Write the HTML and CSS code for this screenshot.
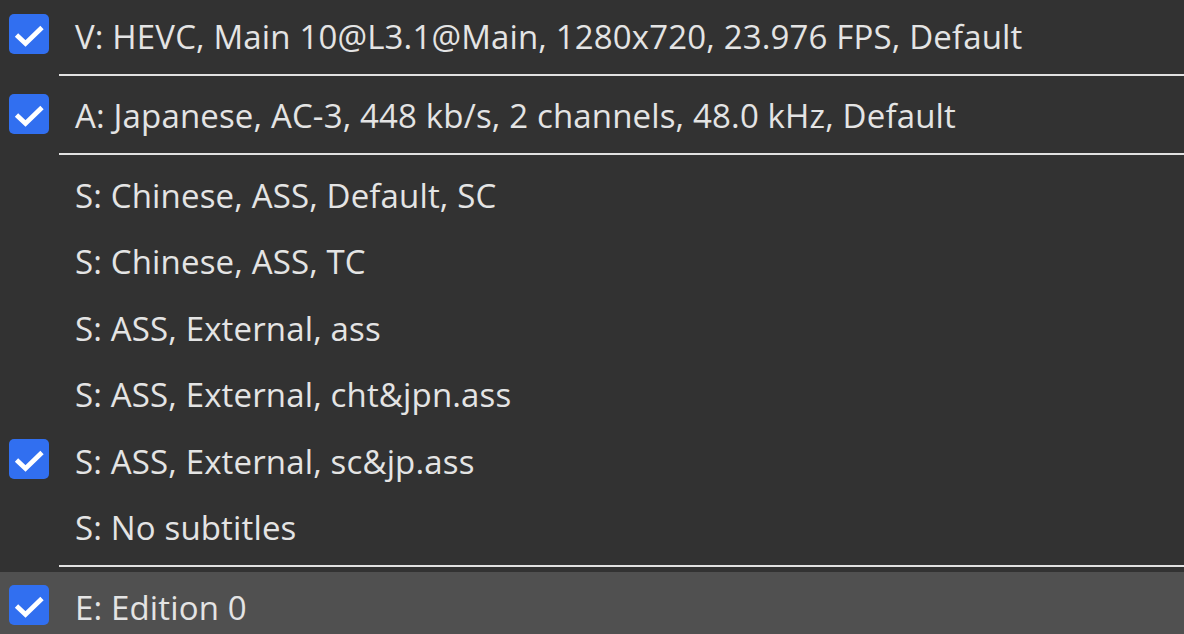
FILE: index.html
```html
<!DOCTYPE html>
<html>
<head>
<meta charset="utf-8">
<link rel="stylesheet" href="styles.css">
</head>
<body>
<div class="menu">
  <div class="item">
    <span class="check on"><svg viewBox="0 0 40 40" width="40" height="40"><path d="M7.5 21 L16.5 29.5 L33 13.5" fill="none" stroke="#fff" stroke-width="4.8" stroke-linecap="butt" stroke-linejoin="miter"/></svg></span>
    <span class="label">V: HEVC, Main 10@L3.1@Main, 1280x720, 23.976 FPS, Default</span>
  </div>
  <div class="sep"></div>
  <div class="item">
    <span class="check on"><svg viewBox="0 0 40 40" width="40" height="40"><path d="M7.5 21 L16.5 29.5 L33 13.5" fill="none" stroke="#fff" stroke-width="4.8" stroke-linecap="butt" stroke-linejoin="miter"/></svg></span>
    <span class="label">A: Japanese, AC-3, 448 kb/s, 2 channels, 48.0 kHz, Default</span>
  </div>
  <div class="sep"></div>
  <div class="item">
    <span class="check"></span>
    <span class="label">S: Chinese, ASS, Default, SC</span>
  </div>
  <div class="item">
    <span class="check"></span>
    <span class="label">S: Chinese, ASS, TC</span>
  </div>
  <div class="item">
    <span class="check"></span>
    <span class="label">S: ASS, External, ass</span>
  </div>
  <div class="item">
    <span class="check"></span>
    <span class="label">S: ASS, External, cht&amp;jpn.ass</span>
  </div>
  <div class="item">
    <span class="check on"><svg viewBox="0 0 40 40" width="40" height="40"><path d="M7.5 21 L16.5 29.5 L33 13.5" fill="none" stroke="#fff" stroke-width="4.8" stroke-linecap="butt" stroke-linejoin="miter"/></svg></span>
    <span class="label">S: ASS, External, sc&amp;jp.ass</span>
  </div>
  <div class="item">
    <span class="check"></span>
    <span class="label">S: No subtitles</span>
  </div>
  <div class="sep"></div>
  <div class="item active">
    <span class="check on"><svg viewBox="0 0 40 40" width="40" height="40"><path d="M7.5 21 L16.5 29.5 L33 13.5" fill="none" stroke="#fff" stroke-width="4.8" stroke-linecap="butt" stroke-linejoin="miter"/></svg></span>
    <span class="label">E: Edition 0</span>
  </div>
</div>
</body>
</html>
```

FILE: styles.css
```css
html, body {
  margin: 0;
  padding: 0;
  background: #323232;
  overflow: hidden;
}
.menu {
  display: flex;
  flex-direction: column;
  width: 1184px;
  height: 634px;
  padding-top: 1px;
  box-sizing: border-box;
  background: #323232;
  font-family: "Open Sans", "Noto Sans", sans-serif;
  font-size: 33px;
  letter-spacing: 0.15px;
  color: #e4e4e4;
}
.item {
  display: flex;
  align-items: center;
  height: 66.5px;
  flex: 0 0 66.5px;
}
.item.active {
  background: #505050;
}
.check {
  flex: 0 0 40px;
  width: 40px;
  height: 40px;
  margin-left: 9px;
  border-radius: 5px;
}
.check.on {
  background: #316ff0;
}
.check svg {
  display: block;
}
.label {
  margin-left: 26px;
  white-space: nowrap;
  padding-top: 4px;
}
.sep {
  flex: 0 0 2px;
  height: 2px;
  margin: 6px 0 5px 59px;
  background: #e2e2e2;
}
```
